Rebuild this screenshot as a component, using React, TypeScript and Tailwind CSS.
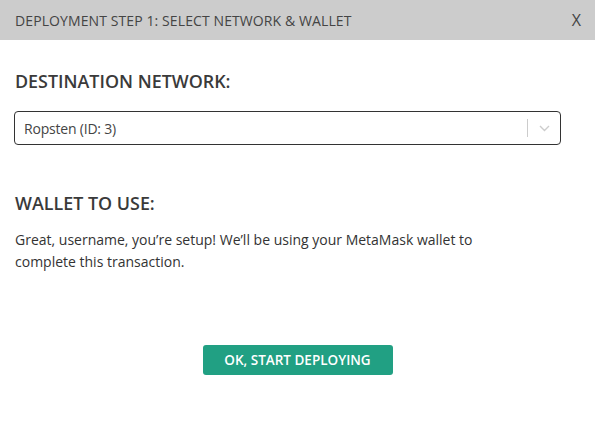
import React from "react";

export default function App() {
  return (
    <div className="w-[595px] h-[432px] bg-white text-[#333]" style={{ fontFamily: '"Open Sans", sans-serif' }}>
      <div className="h-[40px] bg-[#cccccc] flex items-center justify-between pl-[15px] pr-[14px]">
        <span className="text-[14px] text-[#444] tracking-[0.1px]">DEPLOYMENT STEP 1: SELECT NETWORK &amp; WALLET</span>
        <span className="text-[16px] text-[#444]">X</span>
      </div>
      <div className="px-[15px]">
        <div className="mt-[29px] text-[17.9px] leading-[24px] font-semibold text-[#3a3a3a]">DESTINATION NETWORK:</div>
        <div className="mt-[18px] w-[547px] h-[34px] -ml-px border-[1.5px] border-[#333] rounded-[4px] flex items-center">
          <span className="flex-1 pl-[9px] text-[14px] tracking-[-0.2px] text-[#444]">Ropsten (ID: 3)</span>
          <span className="w-px h-[18px] bg-[#ccc]" />
          <span className="w-[32px] flex justify-center">
            <svg width="11" height="7" viewBox="0 0 11 7" fill="none">
              <path d="M1 1l4.5 4.5L10 1" stroke="#ccc" strokeWidth="1.4" />
            </svg>
          </span>
        </div>
        <div className="mt-[46px] text-[17.9px] leading-[24px] font-semibold text-[#3a3a3a]">WALLET TO USE:</div>
        <p className="mt-[14px] max-w-[475px] text-[14px] leading-[22px] text-[#333]">
          Great, username, you’re setup! We’ll be using your MetaMask wallet to complete this transaction.
        </p>
        <div className="mt-[72px] flex justify-center">
          <button className="w-[190px] h-[30px] bg-[#21a083] rounded-[3px] text-white text-[13.5px] font-semibold">
            OK, START DEPLOYING
          </button>
        </div>
      </div>
    </div>
  );
}
